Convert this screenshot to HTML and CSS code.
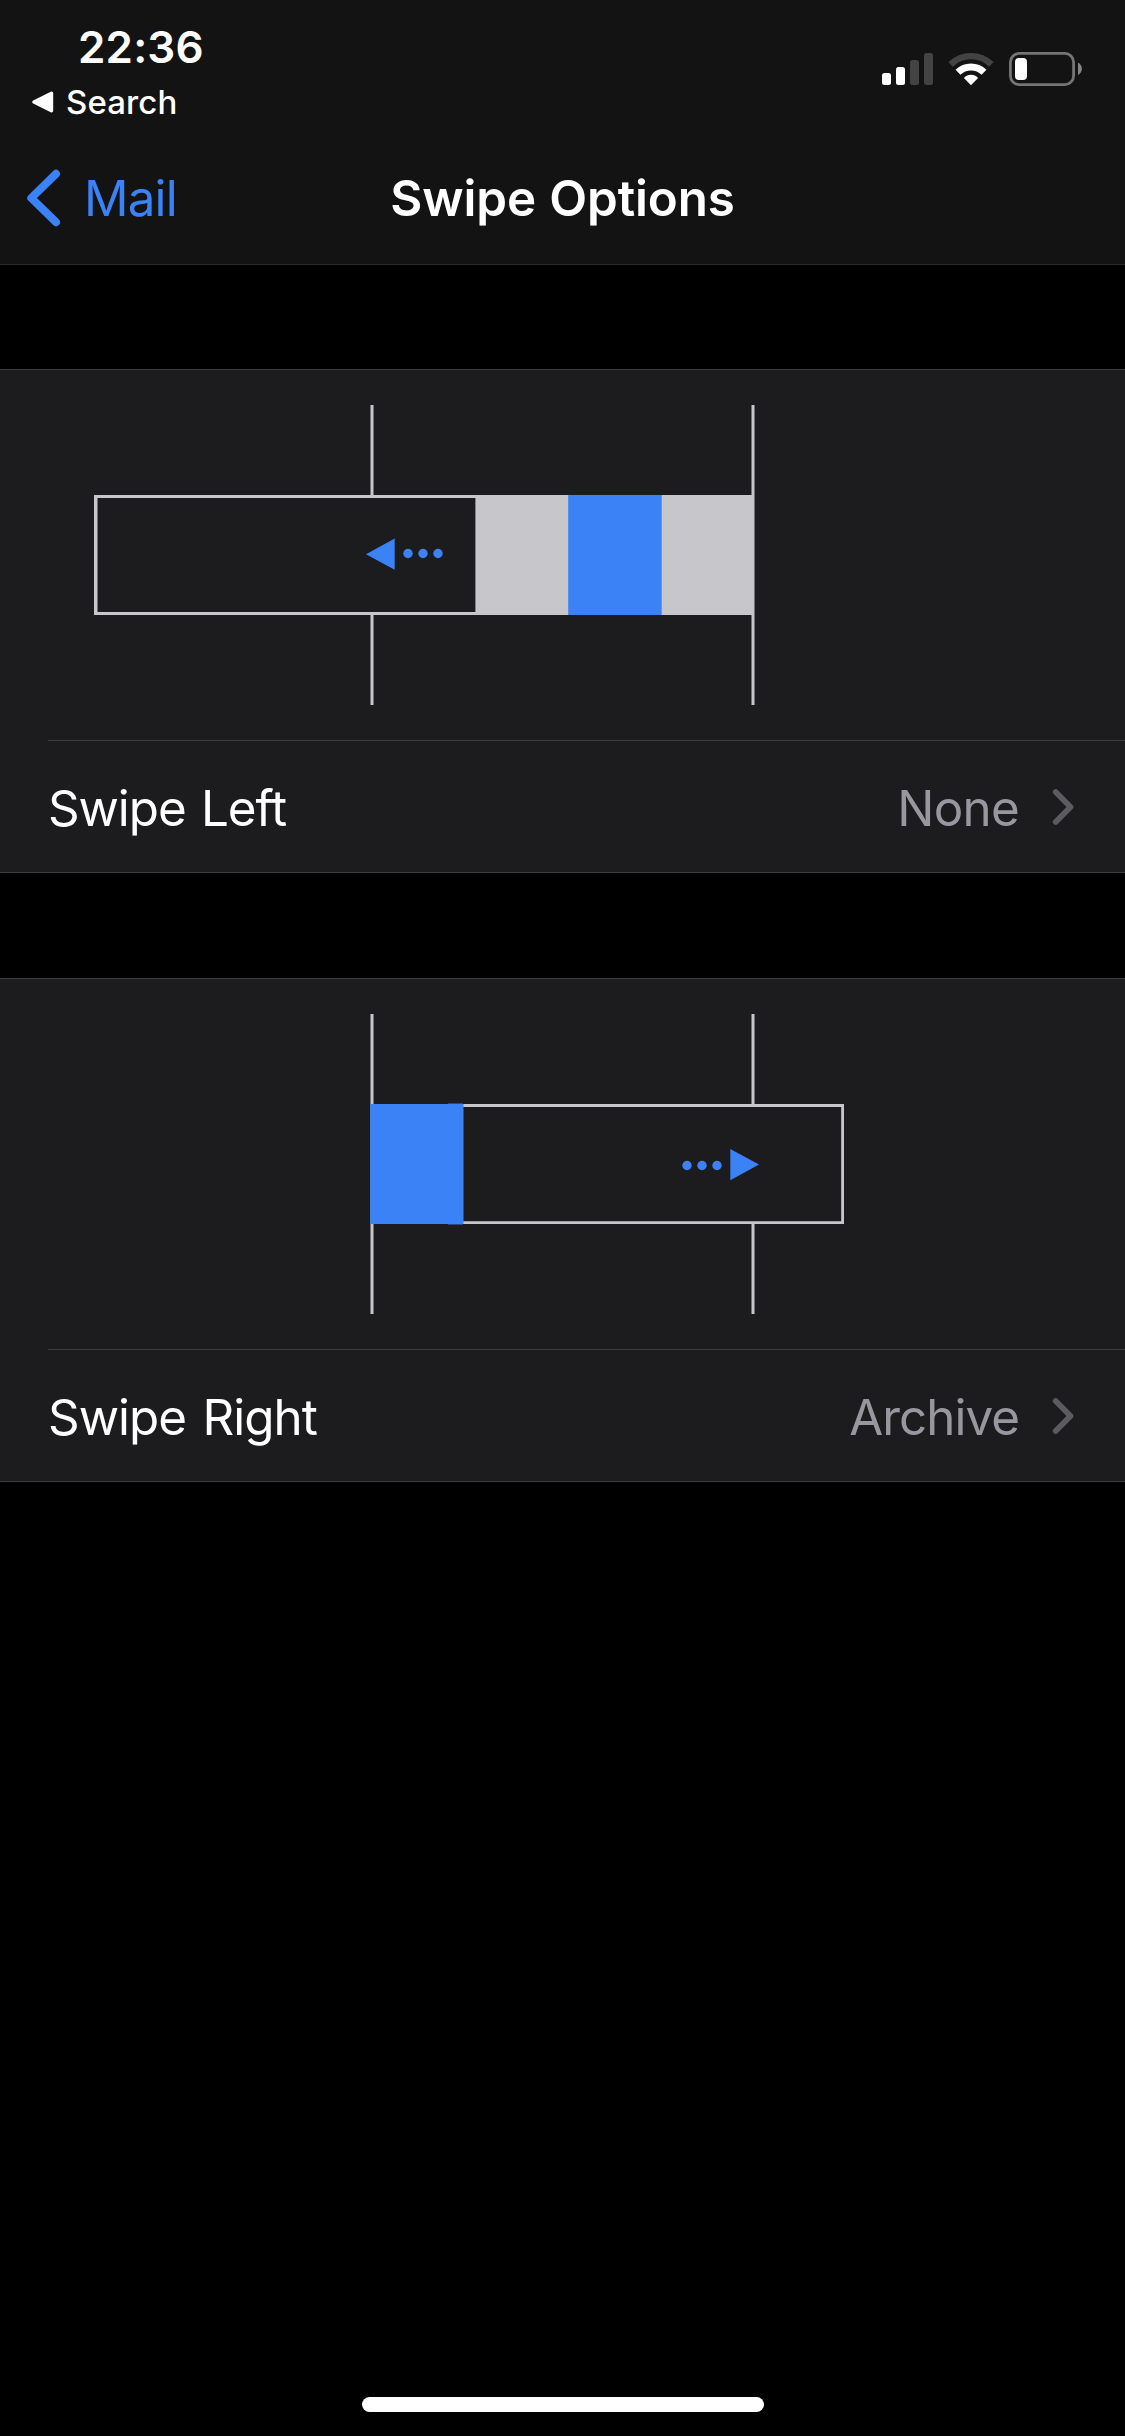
FILE: index.html
```html
<!DOCTYPE html>
<html lang="en">
<head>
<meta charset="utf-8">
<title>Swipe Options</title>
<link rel="stylesheet" href="styles.css">
</head>
<body>
<header class="header">
  <div class="status">
    <div class="status-left">
      <div class="time">22:36</div>
      <div class="return">
        <svg width="22" height="22" viewBox="0 0 22 22"><path d="M2 11 19.5 2.2V19.8Z" fill="#fff" stroke="#fff" stroke-width="3.4" stroke-linejoin="round"/></svg>
        <span>Search</span>
      </div>
    </div>
    <div class="status-right">
      <svg class="signal" width="51" height="32" viewBox="0 0 51 32"><rect y="20" width="9" height="12" rx="2.5" fill="#fff"/><rect x="14" y="14" width="9" height="18" rx="2.5" fill="#fff"/><rect x="28" y="7" width="9" height="25" rx="2.5" fill="#434343"/><rect x="42" width="9" height="32" rx="2.5" fill="#434343"/></svg>
      <svg class="wifi" width="46" height="34" viewBox="0 0 46 34" fill="none" stroke-width="7"><path d="M2.6 12.4A29.3 29.3 0 0 1 43.4 12.4" stroke="#434343" stroke-width="6.4"/><path d="M10 20.3A18.6 18.6 0 0 1 36 20.3" stroke="#fff"/><path d="M23 33.2 15.9 26.1Q18.9 22.8 23 22.8T30.1 26.1Z" fill="#fff"/></svg>
      <svg class="battery" width="73" height="34" viewBox="0 0 73 34"><rect x="1.4" y="1.4" width="63.2" height="31.2" rx="8.8" fill="none" stroke="#757575" stroke-width="2.8"/><rect x="6" y="6" width="12" height="22" rx="4" fill="#fff"/><path d="M69 10.5C74.2 13 74.2 20.6 69 23Z" fill="#858585"/></svg>
    </div>
  </div>
  <nav class="nav">
    <a class="back">
      <svg width="34" height="58" viewBox="0 0 34 58"><path d="M29 4.8 4.3 29 29 53.2" fill="none" stroke="#3b82f6" stroke-width="8" stroke-linecap="round" stroke-linejoin="round"/></svg>
      <span>Mail</span>
    </a>
    <h1 class="title">Swipe Options</h1>
  </nav>
</header>
<main class="groups">
  <section class="group">
    <svg class="diagram" width="1125" height="370" viewBox="0 0 1125 370">
      <path d="M372 35V125M372 245V335M753 35V335" stroke="#c7c6cb" stroke-width="3"/>
      <path d="M94 125H754V245H94ZM97.5 128V242H475.4V128Z" fill="#c7c6cb" fill-rule="evenodd"/>
      <rect x="568.2" y="125" width="93.5" height="120" fill="#3b82f6"/>
      <path d="M366 184.2 394.7 168.6V199.8Z" fill="#3b82f6"/>
      <circle cx="408" cy="183.5" r="4.7" fill="#3b82f6"/><circle cx="423" cy="183.5" r="4.7" fill="#3b82f6"/><circle cx="438" cy="183.5" r="4.7" fill="#3b82f6"/>
    </svg>
    <div class="row">
      <span class="label">Swipe Left</span>
      <span class="value none">None</span>
      <svg class="chevron" width="22" height="38" viewBox="0 0 22 38"><path d="M3.7 3.1 18.5 18 3.7 32.9" fill="none" stroke="#5c5c60" stroke-width="5.7" stroke-linecap="round" stroke-linejoin="round"/></svg>
    </div>
  </section>
  <section class="group">
    <svg class="diagram" width="1125" height="370" viewBox="0 0 1125 370">
      <path d="M372 35V335M753 35V125M753 245V335" stroke="#c7c6cb" stroke-width="3"/>
      <path d="M450 126.5H842.6V243.7H450" fill="none" stroke="#c7c6cb" stroke-width="2.8"/>
      <path d="M448 124.5H463M448 245.5H463" stroke="#2d4a80"/>
      <rect x="370.3" y="125" width="93.2" height="120" fill="#3b82f6"/>
      <path d="M759 185.6 730.3 170V201.2Z" fill="#3b82f6"/>
      <circle cx="687" cy="186.5" r="4.7" fill="#3b82f6"/><circle cx="702" cy="186.5" r="4.7" fill="#3b82f6"/><circle cx="717" cy="186.5" r="4.7" fill="#3b82f6"/>
    </svg>
    <div class="row">
      <span class="label right">Swipe Right</span>
      <span class="value">Archive</span>
      <svg class="chevron" width="22" height="38" viewBox="0 0 22 38"><path d="M3.7 3.1 18.5 18 3.7 32.9" fill="none" stroke="#5c5c60" stroke-width="5.7" stroke-linecap="round" stroke-linejoin="round"/></svg>
    </div>
  </section>
</main>
<div class="home"></div>
</body>
</html>
```
FILE: styles.css
```css
* { box-sizing: border-box; }
body {
  margin: 0;
  width: 1125px;
  height: 2436px;
  display: flex;
  flex-direction: column;
  background: #000;
  color: #fff;
  font: 400 49.3px/60px Inter, "Liberation Sans", sans-serif;
}
svg { display: block; flex: none; }
.header { height: 265px; background: #131313; border-bottom: 1px solid #2b2b2b; }
.status { height: 132px; display: flex; justify-content: space-between; padding: 20px 43px 0 32px; }
.time { padding-left: 46px; font-size: 44px; line-height: 54px; font-weight: 600; letter-spacing: .15px; }
.return {
  display: flex;
  align-items: center;
  gap: 12px;
  margin-top: 8px;
  font-size: 33px;
  line-height: 40px;
  font-weight: 500;
  letter-spacing: .1px;
}
.status-right { display: flex; align-items: flex-start; padding-top: 32px; }
.signal { margin-top: 1px; }
.wifi { margin-left: 15px; }
.battery { margin-left: 15px; }
.nav { height: 132px; display: grid; grid-template-columns: 1fr auto 1fr; align-items: center; }
.back { display: flex; align-items: center; gap: 23px; padding-left: 27px; color: #3b82f6; letter-spacing: -.8px; }
.title { margin: 0; font-size: 49.3px; font-weight: 600; letter-spacing: -.1px; word-spacing: 1px; }
.groups { flex: 1; display: flex; flex-direction: column; gap: 105px; padding-top: 104px; }
.group { background: #1c1c1e; border: solid #3d3d40; border-width: 1px 0; }
.row {
  height: 132px;
  display: flex;
  align-items: center;
  margin-left: 48px;
  padding: 3px 51px 0 0;
  border-top: 1px solid #3d3d40;
}
.label { flex: 1; letter-spacing: -1.05px; word-spacing: 2.5px; }
.label.right { letter-spacing: -.95px; word-spacing: 3.4px; }
.value { margin-right: 33px; color: #98979f; letter-spacing: -.96px; }
.value.none { letter-spacing: -.7px; }
.home { align-self: center; width: 402px; height: 15px; margin-bottom: 24px; border-radius: 8px; background: #fff; }
```
